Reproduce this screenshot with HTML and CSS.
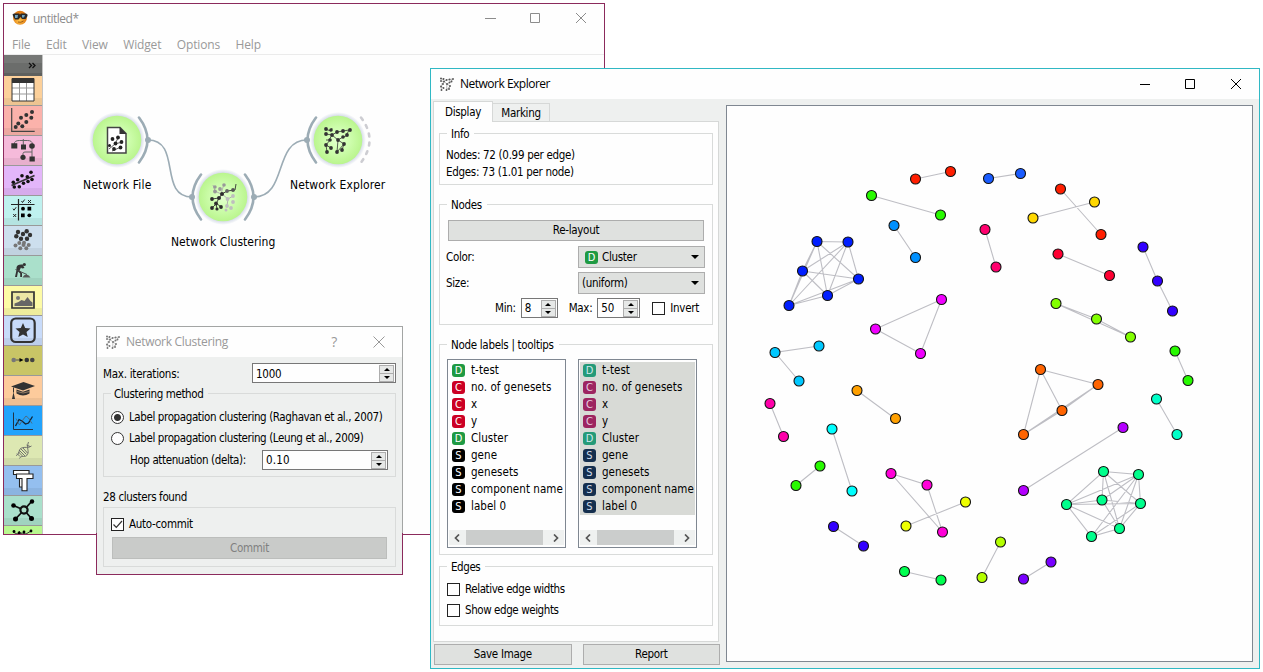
FILE: index.html
```html
<!DOCTYPE html>
<html lang="en">
<head>
<meta charset="utf-8">
<title>untitled*</title>
<link rel="stylesheet" href="styles.css">
</head>
<body>
<main class="desktop">

<section class="window main-window">
  <header class="titlebar">
    <svg class="app-icon" width="16" height="16" viewBox="0 0 16 16"><defs><radialGradient id="orange" cx=".45" cy=".7"><stop offset="0" stop-color="#ffc54a"/><stop offset="1" stop-color="#e07a12"/></radialGradient></defs><circle cx="8" cy="7.800" r="7" fill="url(#orange)"/><path d="M.5 4.500 2 3.500h5l1 1 1-1h5l1.500 1v1.500L13.500 9H10L8.500 7 6.500 9.500H3L1.500 7z" fill="#2a2a2a"/><path d="M3 5h3l-.5 3H3zM10 5h3l-1 2.500h-2z" fill="#6fa3c0"/><path d="M6 12q3 1 5.500-1" fill="none" stroke="#8a4a10" stroke-width=".8"/></svg>
    <span class="title">untitled*</span>
    <svg class="controls" width="110" height="12" viewBox="0 0 110 12"><path d="M1 6.500h11M46.500 1.500h9v9h-9zM92 1l10 10M102 1 92 11"/></svg>
  </header>
  <nav class="menu"><span>File</span><span>Edit</span><span>View</span><span>Widget</span><span>Options</span><span>Help</span></nav>
  <div class="workspace">
    <aside class="toolbox">
      <div class="toolbox-head"><svg width="8" height="7" viewBox="0 0 8 7"><path d="M1 1l2.500 2.500L1 6M4.500 1 7 3.500 4.500 6"/></svg></div>
      <div class="tool data"><svg viewBox="0 0 38 29"><path d="M8 3h22v22H8z" fill="#fff"/><path d="M8 11h22v2H8zM8 17h22v2H8z" fill="#ccc"/><path d="M15.500 6v19M22.500 6v19" stroke="#999"/><path d="M8 2.500h22v22.500H8z" fill="none" stroke="#333"/><path d="M8 2h22v5H8z" fill="#333"/></svg></div>
      <div class="tool visualize"><svg viewBox="0 0 38 29"><path d="M7.700 2v23.300h23" fill="none" stroke="#444" stroke-width="1.200"/><g fill="#333"><circle cx="11.700" cy="21" r="2"/><circle cx="14.300" cy="17.500" r="2"/><circle cx="18.300" cy="20.300" r="2"/><circle cx="17" cy="11.700" r="2"/><circle cx="22.300" cy="9" r="2"/><circle cx="22.300" cy="16" r="2"/><circle cx="28" cy="6" r="2"/><circle cx="27.300" cy="11.700" r="2"/></g></svg></div>
      <div class="tool model"><svg viewBox="0 0 38 29"><path d="M10.300 8q0-3.500 5-3.500h8q5 0 5 3.500M19.300 3v6M28 10v11M19 20v-2.500q0-1.500 2-1.500h7" fill="none" stroke="#666"/><g fill="#333"><path d="M7.300 7.300h6v5.300h-6zM17 8.500h5v5h-5zM25.500 20.500h5.300v5h-5.300z"/><circle cx="28" cy="10" r="2.800"/><circle cx="19" cy="21.300" r="2.600"/></g></svg></div>
      <div class="tool regress"><svg viewBox="0 0 38 29"><path d="M7.500 19.500 30.500 9.500" stroke="#333" stroke-width="1.500"/><g fill="#111"><circle cx="9.300" cy="16.300" r="1.800"/><circle cx="10.300" cy="21" r="1.800"/><circle cx="15.300" cy="20.700" r="1.800"/><circle cx="13.700" cy="13.700" r="1.800"/><circle cx="18" cy="9.700" r="1.800"/><circle cx="19.500" cy="17.300" r="1.800"/><circle cx="23.300" cy="10.700" r="1.800"/><circle cx="24" cy="15.500" r="1.800"/><circle cx="27" cy="6.300" r="1.800"/><circle cx="28" cy="13.500" r="1.800"/></g></svg></div>
      <div class="tool evaluate"><svg viewBox="0 0 38 29"><path d="M14.500 3v21.500M7 8.500h23.500" stroke="#222" stroke-width="1.200"/><path d="M17.500 5l1 1.500 2.200-3M24 4l3 3M27 4l-3 3M9 12.700l1 1.500 2.200-3M9.200 18l3 3M12.200 18l-3 3" fill="none" stroke="#222"/><path d="M23.500 10.800h3.700v3.700h-3.700zM17 17.500h3.700v3.700H17z"/><circle cx="19" cy="12.700" r="1.900"/><circle cx="25.300" cy="19.300" r="1.900"/></svg></div>
      <div class="tool cluster"><svg viewBox="0 0 38 29"><g fill="#333"><circle cx="12.300" cy="10.300" r="2.200"/><circle cx="14" cy="6" r="2.200"/><circle cx="19" cy="8" r="2.200"/><circle cx="22.700" cy="5.200" r="2.200"/><circle cx="26" cy="9" r="2.200"/><circle cx="23" cy="12.700" r="2.200"/><circle cx="17" cy="12.700" r="2.200"/></g><g fill="#777"><circle cx="11.500" cy="19.500" r="2"/><circle cx="15.300" cy="17" r="2"/><circle cx="20" cy="16.700" r="2"/><circle cx="24.700" cy="19" r="2"/><circle cx="16.300" cy="22.300" r="2"/><circle cx="22.300" cy="22.300" r="2"/><circle cx="19.500" cy="19" r="2"/></g></svg></div>
      <div class="tool dig"><svg viewBox="0 0 38 29"><circle cx="20.300" cy="8.500" r="1.600" fill="#333"/><path d="M12.500 11.500Q13 8 18.500 8.500l2 3.500-2.500.5-1-1-1.500 3 2.500 2.500v4h-1.800v-3.500L14 15.500 13 21h-2l1.500-7z" fill="#333"/><path d="M11.500 13.500 23 18.500" stroke="#444" stroke-width=".9"/><path d="M18.500 21.500q2-3.500 4-3 2.500.5 4 3z" fill="#555"/></svg></div>
      <div class="tool image"><svg viewBox="0 0 38 29"><path d="M8 6h22v16H8z" fill="#ebe7a4" stroke="#333" stroke-width="1.700"/><circle cx="14" cy="12" r="2" fill="#777"/><path d="M10.500 20v-2.500l4-1.500 3-2 3 1 3-4 3 4 2 1.500V20z" fill="#666"/></svg></div>
      <div class="tool star"><svg viewBox="0 0 38 29"><rect x="7.200" y="2.500" width="23.500" height="23.500" rx="4.500" fill="none" stroke="#333" stroke-width="2.200"/><path d="M19 7l2.200 5 5.300.5-4 3.500 1.200 5-4.700-2.600-4.700 2.600 1.200-5-4-3.500 5.300-.5z" fill="#333"/></svg></div>
      <div class="tool flow"><svg viewBox="0 0 38 29"><path d="M12 14h5" stroke="#555"/><path d="M15.500 12l4 2-4 2z"/><circle cx="9.700" cy="14" r="2.300" fill="#777"/><circle cx="22.800" cy="14" r="2.300" fill="#333"/><circle cx="28.300" cy="14" r="2.300" fill="#444"/></svg></div>
      <div class="tool edu"><svg viewBox="0 0 38 29"><path d="M7 10.500 19.500 6 31 10l-12 4.500z" fill="#333"/><path d="M12.500 13.500l6.500 2.200 6.500-2.200v4q-6.500 4-13 0z" fill="#333"/><path d="M13 15.500q6 3 12.500 0" stroke="#d9b08a" fill="none" stroke-width=".6"/><path d="M9.500 11.500v5" stroke="#333"/><path d="M9.500 16l1.500 7H8z" fill="#333"/></svg></div>
      <div class="tool series"><svg viewBox="0 0 38 29"><path d="M9.500 6.500V23.500h19.500" fill="none" stroke="#234"/><path d="M11.500 20l3.500-6.500 3 1.500 3.500 3 3-1 4-6.500" fill="none" stroke="#123" stroke-width="1.300"/><path d="M12 12.500l3.500 6.500 2.500-4 4-5 2.500 2 3.500 5.500" fill="none" stroke="#4a6b85"/></svg></div>
      <div class="tool bio"><svg viewBox="0 0 38 29"><g fill="none" stroke="#666" stroke-width=".9"><path d="M12 19.500c4-1 2-6 5.500-7.500s7 .5 10-2M15.500 22.500c1.500-4 6 0 8-4s-1.500-6 1-12.500"/><path d="M15 14l6 6M16.500 12.500l6 6M19 12l4.500 5M14.500 16l4 4M22.500 9l3.500 1.500M13 17.500l3 3"/></g></svg></div>
      <div class="tool textmine"><svg viewBox="0 0 38 29"><g fill="#fff" stroke="#222" stroke-width="1.100"><path d="M9.500 4.500H25v4h-4.500V21h-5V8.500h-6z"/><path d="M12.500 8H29v4.500h-6V24.700h-5V12.500h-5.500z"/></g></svg></div>
      <div class="tool net"><svg viewBox="0 0 38 29"><path d="M20 14 9.500 9.500M20 14l8-9M20 14l-8.500 9M20 14l7.500 8.500" stroke="#111" stroke-width="1.800"/><circle cx="20" cy="14" r="3.600" fill="#aaddc8" stroke="#111" stroke-width="2.200"/><circle cx="9.500" cy="9.500" r="2.300"/><circle cx="28" cy="5.500" r="2.200"/><circle cx="11.500" cy="23" r="2.500"/><circle cx="27.500" cy="22.500" r="2.500"/></svg></div>
      <div class="tool networks"><svg viewBox="0 0 38 29"><path d="M9 6l4 2 5-1 4 1 5-3M15 5l4 5" stroke="#333" fill="none"/><circle cx="10" cy="5.500" r="1.400"/><circle cx="15" cy="7" r="1.400"/><circle cx="20" cy="6" r="1.400"/><circle cx="27" cy="5" r="1.400"/></svg></div>
    </aside>
    <svg class="canvas" width="560" height="479" viewBox="43 55 560 479">
      <defs>
        <radialGradient id="node"><stop offset="0" stop-color="#e3ffd0"/><stop offset=".4" stop-color="#d2ffb4"/><stop offset="1" stop-color="#baf58e"/></radialGradient>
        <radialGradient id="halo"><stop offset=".86" stop-color="#d6dce8"/><stop offset="1" stop-color="#fefefe"/></radialGradient>
        <g id="net-icon"><path d="M-13-11l6 2 1-3M-12-6l6 1M-6-5l-3 5M-6-5l5-3 6-1 6-1M-6-5l6 5M11-10l-3 6-3 1-5 3 6 4-2 6M0 0l-1 12M-8 0h-4M-8 0l-4 5 1 7M-12 5l5 3M6 4l-7 8" fill="none" stroke="currentColor" stroke-width=".8"/><g fill="currentColor"><circle cx="-12" cy="-11" r="1.900"/><circle cx="-7" cy="-10" r="1.800"/><circle cx="-12" cy="-6" r="1.900"/><circle cx="-6" cy="-5" r="1.900"/><circle cx="-1" cy="-8" r="1.900"/><circle cx="5" cy="-9" r="1.900"/><circle cx="12" cy="-10" r="1.900"/><circle cx="9" cy="-5" r="1.900"/><circle cx="5" cy="-3" r="1.800"/><circle cx="-8" cy="0" r="1.800"/><circle cx="0" cy="0" r="1.900"/><circle cx="6" cy="4" r="1.900"/><circle cx="-12" cy="5" r="1.900"/><circle cx="-7" cy="8" r="1.900"/><circle cx="-11" cy="12" r="1.900"/><circle cx="-1" cy="12" r="1.900"/><circle cx="4" cy="10" r="1.900"/></g></g>
      </defs>
      <g class="link"><path d="M148 140C182 140 158 197 192 197M254 197C288 197 273 140 307 140"/></g>
      <g class="arc"><path d="M139 117.500Q156 140 139 162.500M201 174.500Q184 197 201 219.500M245 174.500Q262 197 245 219.500M316 117.500Q299 140 316 162.500"/></g>
      <path class="arc idle" d="M361 117.500Q378 140 361 162.500"/>
      <g fill="#9cacb5"><circle cx="148" cy="140" r="3"/><circle cx="192" cy="197" r="3"/><circle cx="254" cy="197" r="3"/><circle cx="307" cy="140" r="3"/></g>
      <g fill="url(#halo)"><circle cx="117" cy="140" r="28"/><circle cx="223" cy="197" r="28"/><circle cx="338" cy="140" r="28"/></g>
      <g fill="url(#node)"><circle cx="117" cy="140" r="24.300"/><circle cx="223" cy="197" r="24.300"/><circle cx="338" cy="140" r="24.300"/></g>
      <path d="M107.500 127.500h12.500l6 6v19.500h-18.500z" fill="#fff" stroke="#444" stroke-width="1.500"/><path d="M119.500 127v7h7z" fill="#333"/>
      <path d="M109 149l6-5 3-6M116 143.500l5-1M112 151l9-4" stroke="#333" fill="none" stroke-width=".8"/>
      <g fill="#222"><circle cx="112.500" cy="139" r="1.900"/><circle cx="118" cy="137.500" r="1.900"/><circle cx="115.500" cy="143.500" r="1.900"/><circle cx="121.500" cy="142" r="1.900"/><circle cx="109.500" cy="145.500" r="1.500"/><circle cx="114" cy="149" r="1.900"/><circle cx="120.500" cy="147.500" r="1.900"/></g>
      <use href="#net-icon" x="338" y="140" color="#333"/>
      <path d="M213 185l2 6 6 3M224 184l-3 10M222 194l6 5 5-3M228 199l-1 7" fill="none" stroke="#aaa" stroke-width=".9"/><g fill="#999"><circle cx="215" cy="187" r="1.700"/><circle cx="220" cy="189" r="1.900"/><circle cx="224" cy="185" r="1.800"/><circle cx="215" cy="191.500" r="1.900"/></g>
      <g fill="#bebebe"><circle cx="227.500" cy="199" r="1.900"/><circle cx="233" cy="196" r="1.900"/><circle cx="233" cy="202" r="1.900"/><circle cx="227" cy="206" r="1.900"/><circle cx="231" cy="208" r="1.900"/><circle cx="226" cy="210" r="1.500"/></g>
      <path d="M212 199l7-1 3-4 5-3 8-1 1-6M219 198l-3 6-4 4M216 203l5 4M216 203l1 6" fill="none" stroke="#333" stroke-width=".9"/><g fill="#2d2d2d"><circle cx="222" cy="194" r="2"/><circle cx="219" cy="198" r="2"/><circle cx="212" cy="199" r="1.900"/><circle cx="216" cy="203.500" r="1.900"/><circle cx="212" cy="208" r="1.900"/><circle cx="217" cy="209" r="1.600"/><circle cx="221" cy="207" r="1.900"/><circle cx="227" cy="191" r="1.900" fill="#666"/><circle cx="233" cy="190" r="1.900" fill="#555"/></g>
      <g class="node-label"><text x="117" y="189" textLength="68">Network File</text><text x="223" y="246" textLength="104">Network Clustering</text><text x="337.500" y="189" textLength="95">Network Explorer</text></g>
    </svg>
  </div>
</section>

<section class="window clustering">
  <header class="titlebar">
    <svg class="app-icon" width="14" height="14" viewBox="-14 -14 28 28" color="#777"><use href="#net-icon"/></svg>
    <span class="title">Network Clustering</span>
    <span class="help">?</span>
    <svg class="close" width="12" height="12" viewBox="0 0 12 12"><path d="M.5.500l11 11M11.500.500l-11 11"/></svg>
  </header>
  <div class="cl-body">
    <div class="cl-iter"><span class="iter-label">Max. iterations:</span><span class="spin"><span>1000</span><i class="steps"></i></span></div>
    <div class="group method">
      <h3>Clustering method</h3>
      <label class="radio-row"><i class="radio on"></i><span>Label propagation clustering (Raghavan et al., 2007)</span></label>
      <label class="radio-row"><i class="radio"></i><span>Label propagation clustering (Leung et al., 2009)</span></label>
      <div class="hop"><span>Hop attenuation (delta):</span><span class="spin"><span class="delta">0.10</span><i class="steps"></i></span></div>
    </div>
    <p class="found">28 clusters found</p>
    <div class="group commit-box">
      <label class="check-row"><i class="check"><svg width="11" height="11" viewBox="0 0 11 11"><path d="M1.500 5.500 4.300 8.300 10 2"/></svg></i><span>Auto-commit</span></label>
      <button class="btn disabled">Commit</button>
    </div>
  </div>
</section>

<section class="window explorer">
  <header class="titlebar">
    <svg class="app-icon" width="14" height="14" viewBox="-14 -14 28 28" color="#555"><use href="#net-icon"/></svg>
    <span class="title">Network Explorer</span>
    <svg class="controls" width="110" height="12" viewBox="0 0 110 12"><path d="M1 6.500h10M46.500 1.500h9v9h-9zM92 1l10 10M102 1 92 11"/></svg>
  </header>
  <div class="ex-body">
    <div class="side">
      <div class="tabs"><span class="tab active">Display</span><span class="tab">Marking</span></div>
      <div class="pane">
        <div class="group info"><h3>Info</h3><p>Nodes: 72 (0.99 per edge)</p><p>Edges: 73 (1.01 per node)</p></div>
        <div class="group nodes"><h3>Nodes</h3>
          <button class="btn">Re-layout</button>
          <div class="field color"><span>Color:</span><span class="combo"><b class="var d">D</b><span>Cluster</span></span></div>
          <div class="field"><span>Size:</span><span class="combo"><span>(uniform)</span></span></div>
          <div class="sizes"><span>Min:</span><span class="spin s1"><span>8</span><i class="steps"></i></span><span>Max:</span><span class="spin s2"><span>50</span><i class="steps"></i></span><i class="check"></i><span>Invert</span></div>
        </div>
        <div class="group labels"><h3>Node labels | tooltips</h3>
          <div class="lists">
            <div class="list"><ul><li><b class="var d">D</b>t-test</li><li><b class="var c">C</b>no. of genesets</li><li><b class="var c">C</b>x</li><li><b class="var c">C</b>y</li><li><b class="var d">D</b>Cluster</li><li><b class="var s">S</b>gene</li><li><b class="var s">S</b>genesets</li><li><b class="var s">S</b>component name</li><li><b class="var s">S</b>label 0</li></ul>
              <div class="scroll"><svg width="6" height="8" viewBox="0 0 6 8"><path d="M5 .5 1.500 4 5 7.500"/></svg><i></i><svg width="6" height="8" viewBox="0 0 6 8"><path d="M1 .5 4.500 4 1 7.500"/></svg></div></div>
            <div class="list selected"><ul><li><b class="var d">D</b>t-test</li><li><b class="var c">C</b>no. of genesets</li><li><b class="var c">C</b>x</li><li><b class="var c">C</b>y</li><li><b class="var d">D</b>Cluster</li><li><b class="var s">S</b>gene</li><li><b class="var s">S</b>genesets</li><li><b class="var s">S</b>component name</li><li><b class="var s">S</b>label 0</li></ul>
              <div class="scroll"><svg width="6" height="8" viewBox="0 0 6 8"><path d="M5 .5 1.500 4 5 7.500"/></svg><i></i><svg width="6" height="8" viewBox="0 0 6 8"><path d="M1 .5 4.500 4 1 7.500"/></svg></div></div>
          </div>
        </div>
        <div class="group edges"><h3>Edges</h3>
          <label class="check-row"><i class="check"></i><span>Relative edge widths</span></label>
          <label class="check-row"><i class="check"></i><span>Show edge weights</span></label>
        </div>
      </div>
      <div class="actions"><button class="btn">Save Image</button><button class="btn">Report</button></div>
    </div>
    <div class="graph">
      <svg width="525" height="555" viewBox="727 106 525 555">
        <path class="edge" d="M915.500 179 950.500 171.500M988.500 178.500 1020.500 173.500M871.500 195.500 940.500 215M894 225.500 915.500 257.500M985 229.500 996 267M1060.500 189 1101 234.500M1033 218 1094.500 202M1058 254 1109.500 275.500M1143 247 1157.500 281 1172.500 311M1056 303.500 1096.500 319 1130.500 337ZM1175 351 1188 380.500M1156.500 399 1177 434.500M941.500 299.500 875.500 329 920.500 353.500ZM819 346 775 352.500 799 381M770 403.500 783.500 436.500M857 390.500 895 418.500M832 429 852 491M820 466 796 485.500M833.500 526.500 863.500 546M891 473.500 927 485 942.500 532ZM906 526 965.500 502M904.500 571.500 941 580M1000.500 542 982 577.500M1051 562 1023.500 579M1123 427.500 1023.500 490.500M1040.500 369.500 1098 384.500 1062 410.500ZM1040.500 369.500 1023.500 434.500 1062 410.500M1023.500 434.500 1098 384.500"/>
        <path class="edge" d="M817 241.500 848 242 858.500 279 827.500 295.500 789 305.500 802.500 271ZM817 241.500 858.500 279M817 241.500 827.500 295.500M817 241.500 789 305.500M848 242 827.500 295.500M848 242 789 305.500M848 242 802.500 271M858.500 279 789 305.500M858.500 279 802.500 271M827.500 295.500 802.500 271"/>
        <path class="edge" d="M1103.500 471.500 1138.500 474.500 1140.500 503.500 1119.500 528.500 1091.500 536.500 1066.500 504.500ZM1103.500 471.500 1102 500M1103.500 471.500 1140.500 503.500M1103.500 471.500 1119.500 528.500M1138.500 474.500 1102 500M1138.500 474.500 1119.500 528.500M1138.500 474.500 1091.500 536.500M1138.500 474.500 1066.500 504.500M1140.500 503.500 1102 500M1140.500 503.500 1091.500 536.500M1140.500 503.500 1066.500 504.500M1119.500 528.500 1102 500M1119.500 528.500 1066.500 504.500M1066.500 504.500 1102 500"/>
        <g class="vertex">
          <g fill="#ff1e00"><circle cx="915.500" cy="179" r="5"/><circle cx="950.500" cy="171.500" r="5"/><circle cx="1060.500" cy="189" r="5"/><circle cx="1101" cy="234.500" r="5"/></g>
          <g fill="#1a5cff"><circle cx="988.500" cy="178.500" r="5"/><circle cx="1020.500" cy="173.500" r="5"/></g>
          <g fill="#28fa00"><circle cx="871.500" cy="195.500" r="5"/><circle cx="940.500" cy="215" r="5"/><circle cx="1175" cy="351" r="5"/><circle cx="1188" cy="380.500" r="5"/><circle cx="820" cy="466" r="5"/><circle cx="796" cy="485.500" r="5"/></g>
          <g fill="#0090ff"><circle cx="894" cy="225.500" r="5"/><circle cx="915.500" cy="257.500" r="5"/></g>
          <g fill="#ff006e"><circle cx="985" cy="229.500" r="5"/><circle cx="996" cy="267" r="5"/></g>
          <g fill="#ffd800"><circle cx="1033" cy="218" r="5"/><circle cx="1094.500" cy="202" r="5"/></g>
          <g fill="#ff0032"><circle cx="1058" cy="254" r="5"/><circle cx="1109.500" cy="275.500" r="5"/></g>
          <g fill="#3200ff"><circle cx="1143" cy="247" r="5"/><circle cx="1157.500" cy="281" r="5"/><circle cx="1172.500" cy="311" r="5"/><circle cx="833.500" cy="526.500" r="5"/><circle cx="863.500" cy="546" r="5"/></g>
          <g fill="#82ff00"><circle cx="1056" cy="303.500" r="5"/><circle cx="1096.500" cy="319" r="5"/><circle cx="1130.500" cy="337" r="5"/></g>
          <g fill="#00ffc8"><circle cx="1156.500" cy="399" r="5"/><circle cx="1177" cy="434.500" r="5"/></g>
          <g fill="#f000ff"><circle cx="941.500" cy="299.500" r="5"/><circle cx="875.500" cy="329" r="5"/><circle cx="920.500" cy="353.500" r="5"/></g>
          <g fill="#00c8ff"><circle cx="819" cy="346" r="5"/><circle cx="775" cy="352.500" r="5"/><circle cx="799" cy="381" r="5"/></g>
          <g fill="#ff00aa"><circle cx="770" cy="403.500" r="5"/><circle cx="783.500" cy="436.500" r="5"/></g>
          <g fill="#ffa000"><circle cx="857" cy="390.500" r="5"/><circle cx="895.500" cy="418.500" r="5"/></g>
          <g fill="#00ffff"><circle cx="832" cy="429" r="5"/><circle cx="852" cy="491" r="5"/></g>
          <g fill="#ff00d8"><circle cx="891" cy="473.500" r="5"/><circle cx="927" cy="485" r="5"/><circle cx="942.500" cy="532" r="5"/></g>
          <g fill="#eeff00"><circle cx="906" cy="526" r="5"/><circle cx="965.500" cy="502" r="5"/></g>
          <g fill="#00ff50"><circle cx="904.500" cy="571.500" r="5"/><circle cx="941" cy="580" r="5"/></g>
          <g fill="#b4ff00"><circle cx="1000.500" cy="542" r="5"/><circle cx="982" cy="577.500" r="5"/></g>
          <g fill="#7800ff"><circle cx="1051" cy="562" r="5"/><circle cx="1023.500" cy="579" r="5"/></g>
          <g fill="#b400ff"><circle cx="1123" cy="427.500" r="5"/><circle cx="1023.500" cy="490.500" r="5"/></g>
          <g fill="#ff6400"><circle cx="1040.500" cy="369.500" r="5"/><circle cx="1098" cy="384.500" r="5"/><circle cx="1062" cy="410.500" r="5"/><circle cx="1023.500" cy="434.500" r="5"/></g>
          <g fill="#001eff"><circle cx="817" cy="241.500" r="5"/><circle cx="848" cy="242" r="5"/><circle cx="858.500" cy="279" r="5"/><circle cx="827.500" cy="295.500" r="5"/><circle cx="789" cy="305.500" r="5"/><circle cx="802.500" cy="271" r="5"/></g>
          <g fill="#00ff8c"><circle cx="1103.500" cy="471.500" r="5"/><circle cx="1138.500" cy="474.500" r="5"/><circle cx="1140.500" cy="503.500" r="5"/><circle cx="1119.500" cy="528.500" r="5"/><circle cx="1091.500" cy="536.500" r="5"/><circle cx="1066.500" cy="504.500" r="5"/><circle cx="1102" cy="500" r="5"/></g>
        </g>
      </svg>
    </div>
  </div>
</section>

</main>
</body>
</html>
```
FILE: styles.css
```css
* { box-sizing: border-box; }
body { margin: 0; background: #fff; color: #000; font: 11.5px/17px "DejaVu Sans Condensed", "DejaVu Sans", sans-serif; font-stretch: condensed; letter-spacing: -.3px; }
h3, p, ul { margin: 0; padding: 0; font: inherit; list-style: none; }
svg { display: block; }
span, p, h3, li { white-space: nowrap; }

.desktop { position: relative; width: 1263px; height: 672px; overflow: hidden; }
.window { position: absolute; display: flex; flex-direction: column; background: #fefefe; border: 1px solid; }
.titlebar { display: flex; align-items: center; height: 30px; font: 12px/16px "Open Sans", "Noto Sans", sans-serif; letter-spacing: -.3px; flex: none; }
.controls, .close { margin-left: auto; fill: none; stroke: currentColor; }

/* Main window */
.main-window { left: 3px; top: 3px; width: 602px; height: 532px; border-color: #8b2a5c; }
.main-window .titlebar { padding: 0 10px 2px 8px; color: #8c8c8c; height: 30px; letter-spacing: -.5px; }
.main-window .title { margin-left: 5px; padding-top: 2px; }
.menu { display: flex; height: 21px; padding: 3px 8px 0; border-bottom: 1px solid #ebebeb; color: #999; font: 12px/15px "Open Sans", "Noto Sans", sans-serif; letter-spacing: -.15px; }
.menu span { margin-right: 15.5px; }
.workspace { display: flex; flex: 1; min-height: 0; overflow: hidden; }
.toolbox { width: 39px; border-right: 1px solid #c4c4c4; overflow: hidden; flex: none; }
.toolbox-head { height: 21px; background: linear-gradient(#767876 0 40%, #6b6d6b 40% 85%, #5e605e 85%); display: flex; align-items: center; justify-content: flex-end; padding-right: 6px; }
.toolbox-head svg { fill: none; stroke: #111; stroke-width: 1.3; }
.tool { height: 30px; border-bottom: 1px solid #999; background-image: linear-gradient(transparent 0 75%, rgba(0,0,0,.06) 75%); }
.tool svg { width: 38px; height: 29px; }
.data { background-color: #fcd09a; }
.visualize { background-color: #fbb2ab; }
.model { background-color: #f5bada; }
.regress { background-color: #e3b6fa; }
.evaluate { background-color: #bff1ef; }
.cluster { background-color: #cddfee; }
.dig { background-color: #aae0cb; }
.image { background-color: #fdfba6; }
.star { background-color: #c8dbfa; }
.flow { background-color: #c9c566; background-image: none; }
.edu { background-color: #fdcb9c; }
.series { background-color: #22a3fc; background-image: none; }
.bio { background-color: #dde8b2; }
.textmine { background-color: #94bfef; }
.net { background-color: #aae0cb; }
.networks { background-color: #b8f78f; }
.canvas { flex: none; }
.link { fill: none; stroke: #9cacb5; stroke-width: 1.6; }
.arc { fill: none; stroke: #9cacb5; stroke-width: 2.6; stroke-linecap: round; }
.idle { stroke: #cdcdd2; stroke-dasharray: 3 6; }
.node-label { font-size: 12px; text-anchor: middle; }

/* Clustering dialog */
.clustering { left: 96px; top: 326px; width: 307px; height: 249px; border-color: #a3a5a4; background: #eef0ef; letter-spacing: -.39px; }
.clustering::after { content: ""; position: absolute; left: -1px; right: -1px; bottom: -1px; height: 41px; border: solid #8b2a5c; border-width: 0 1px 1px; pointer-events: none; }
.clustering .titlebar { background: #fefefe; padding: 0 17px 0 9px; color: #999; }
.clustering .title { margin-left: 6px; }
.help { margin-left: auto; font-size: 14px; }
.clustering .close { margin-left: 36px; }
.cl-body { padding: 6px 6px 0 6px; }
.cl-iter { display: flex; justify-content: space-between; align-items: center; height: 20px; }
.iter-label { padding-top: 2px; letter-spacing: -.25px; }
.cl-iter .spin { width: 144px; }
.spin { display: inline-flex; align-items: center; justify-content: space-between; height: 20px; border: 1px solid #777; background: #fefefe; padding: 0 1px 0 3px; letter-spacing: -.25px; }
.cl-iter .spin span { padding-top: 2px; }
.delta { letter-spacing: .2px; }
.steps { position: relative; width: 15px; height: 17px; border: 1px solid #adadad; background: linear-gradient(#e6e8e7 0 7px, #adadad 7px 8px, #e6e8e7 8px); }
.steps::before, .steps::after { content: ""; position: absolute; left: 3.500px; border: solid transparent; border-width: 0 3px; }
.steps::before { top: 2px; border-bottom: 3px solid #000; }
.steps::after { bottom: 2px; border-top: 3px solid #000; }
.group { position: relative; border: 1px solid #d9dbda; }
.group h3 { position: absolute; top: -9px; left: 7px; padding: 0 5px 0 4px; line-height: 17px; background: #fefefe; }
.method { margin-top: 10px; height: 84px; padding: 13px 7px 0; }
.method h3 { top: -8px; background: #eef0ef; padding: 0 5px 0 3px; }
.radio-row, .check-row { display: flex; align-items: center; height: 21px; }
.radio { width: 13px; height: 13px; margin-right: 5px; border: 1px solid #333; border-radius: 50%; background: #fefefe; }
.radio.on { background: radial-gradient(circle, #333 0 3px, #fefefe 4px); }
.hop { display: flex; align-items: center; justify-content: space-between; padding-left: 19px; height: 22px; }
.hop .spin { width: 126px; }
.found { margin: 12px 0 1px; height: 17px; letter-spacing: -.35px; }
.commit-box { height: 60px; padding: 6px 8px 0; letter-spacing: -.3px; }
.commit-box .check { margin-left: -1px; }
.check { width: 13px; height: 13px; margin-right: 5px; border: 1px solid #222; background: #fefefe; flex: none; }
.check path { fill: none; stroke: #333; stroke-width: 1.2; }
.btn { display: flex; align-items: center; justify-content: center; width: 100%; height: 21px; padding: 0; border: 1px solid #adadad; background: #dfe1df; color: #000; font: inherit; letter-spacing: inherit; border-radius: 0; }
.disabled { margin-top: 2px; height: 22px; background: #c9cbc9; border-color: #bcbebc; color: #808080; }

/* Explorer window */
.explorer { left: 430px; top: 68px; width: 830px; height: 601px; border-color: #30b8c4; background: #eef0ef; }
.explorer .titlebar { background: #fefefe; padding: 0 10px 0 9px; letter-spacing: -.5px; }
.explorer .title { margin-left: 6px; }
.ex-body { display: flex; justify-content: space-between; flex: 1; padding: 2px 6px 0 2px; }
.side { width: 287px; }
.tabs { display: flex; align-items: flex-end; height: 20px; }
.tab { height: 18px; width: 57px; border: 1px solid #d6d8d7; border-left: 0; border-bottom: 0; text-align: center; line-height: 19px; }
.tab.active { position: relative; height: 21px; margin-bottom: -1px; width: 60px; background: #fefefe; border-left: 1px solid #d6d8d7; line-height: 21px; }
.pane { width: 286px; height: 521px; border: 1px solid #d6d8d7; background: #fefefe; padding: 11px 5px 0; }
.info { height: 52px; padding: 13px 6px 0; }
.info h3, .nodes h3, .labels h3, .edges h3 { top: -8px; }
.nodes { height: 121px; margin-top: 19px; padding: 15px 8px 0; }
.nodes > .btn { width: 256px; }
.field { display: flex; align-items: center; justify-content: space-between; height: 26px; margin: 0 -1px 0 -2px; }
.field.color { margin-top: 3px; }
.combo { position: relative; display: flex; align-items: center; width: 127px; height: 22px; padding-left: 3px; border: 1px solid #adadad; background: #dfe1df; }
.combo::after { content: ""; position: absolute; right: 5px; top: 8px; border: solid transparent; border-width: 4px 4px 0; border-top-color: #000; }
.var { display: inline-block; width: 13px; height: 13px; margin-right: 4px; border-radius: 3px; color: #fff; font-weight: normal; font-size: 11px; line-height: 13px; text-align: center; letter-spacing: 0; flex: none; }
.combo .var { margin-left: 3px; }
.d { background: #1f9a43; }
.c { background: #cc0024; }
.s { background: #000; }
.sizes { display: flex; align-items: center; height: 20px; padding-left: 47px; margin-top: 2px; }
.spin.s1 { width: 37px; margin: 0 11px 0 5px; }
.spin.s2 { width: 43px; margin: 0 12px 0 5px; }
.labels { height: 211px; margin-top: 19px; padding: 14px 7px 0; }
.lists { display: flex; gap: 12px; }
.list { width: 119px; height: 189px; border: 1px solid #7f8791; padding: 2px 1px 1px; display: flex; flex-direction: column; justify-content: space-between; letter-spacing: .05px; }
.list ul { overflow: hidden; }
.list li { display: flex; align-items: center; height: 17px; padding-left: 3px; }
.list .var { margin-right: 6px; }
.selected ul { background: #d8dad6; }
.selected .d { background: #259a78; color: #cfe8ee; }
.selected .c { background: #9d2560; color: #e6cfe0; }
.selected .s { background: #152f4e; color: #cfdcea; }
.scroll { display: flex; align-items: center; height: 15px; margin-bottom: 1px; background: #eff1f0; padding: 0 5px; gap: 6px; }
.scroll i { width: 77px; height: 15px; background: #cbcdcc; margin-right: 4px; }
.scroll path { fill: none; stroke: #555; stroke-width: 1.7; }
.edges { height: 60px; margin-top: 11px; padding: 12px 7px 0; letter-spacing: -.42px; }
.actions { display: flex; gap: 11px; margin-top: 2px; padding-left: 1px; }
.actions .btn { width: 138px; }
.graph { width: 527px; height: 557px; margin-top: 4px; border: 1px solid #7f8791; background: #fefefe; }
.edge { fill: none; stroke: #bebec4; stroke-width: 1.1; }
.vertex { stroke: #111; stroke-width: 1.1; }
```
